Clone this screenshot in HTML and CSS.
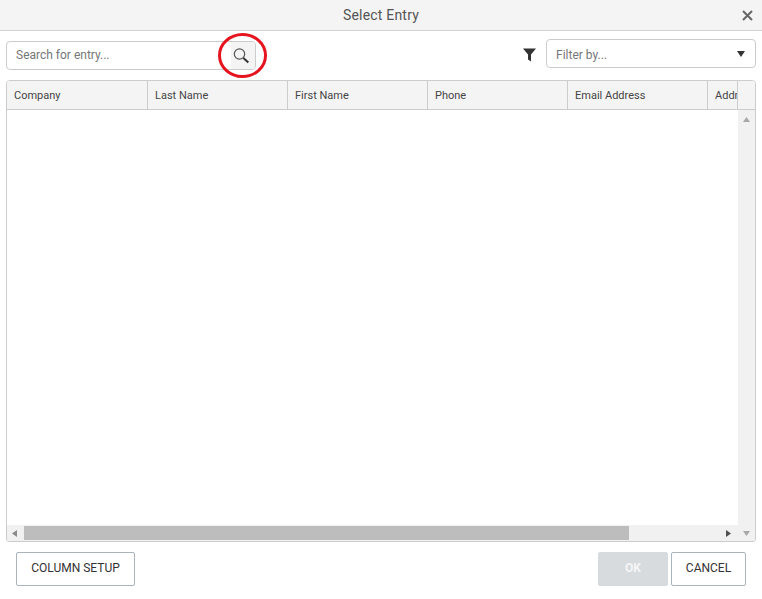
FILE: index.html
```html
<!DOCTYPE html>
<html lang="en">
<head>
<meta charset="utf-8">
<title>Select Entry</title>
<link rel="stylesheet" href="styles.css">
</head>
<body>
<div class="dialog">
  <header class="titlebar">
    <span class="title">Select Entry</span>
    <svg class="close" width="11" height="11" viewBox="0 0 11 11"><path d="M1 1L10 10M10 1L1 10" stroke="#666" stroke-width="2" fill="none"/></svg>
  </header>
  <div class="toolbar">
    <div class="search">
      <span class="placeholder search-text">Search for entry...</span>
      <span class="search-btn">
        <svg class="search-icon" width="18" height="18" viewBox="0 0 18 18"><circle cx="7.5" cy="7" r="5.2" stroke="#555" stroke-width="1.2" fill="none"/><path d="M11.4 11L16.3 15.6" stroke="#333" stroke-width="2" fill="none"/></svg>
      </span>
    </div>
    <svg class="funnel" width="13" height="14" viewBox="0 0 13 14"><path d="M0 0.5H13L8 6.5V13.5L5 11.5V6.5Z" fill="#333"/></svg>
    <div class="filter">
      <span class="placeholder filter-text">Filter by...</span>
      <svg width="8" height="6" viewBox="0 0 8 6"><path d="M0 0H8L4 6Z" fill="#333"/></svg>
    </div>
  </div>
  <div class="grid">
    <div class="grid-head">
      <div class="col col-first">Company</div>
      <div class="col">Last Name</div>
      <div class="col">First Name</div>
      <div class="col">Phone</div>
      <div class="col">Email Address</div>
      <div class="col col-cut">Address</div>
      <div class="head-end"></div>
    </div>
    <div class="grid-body">
      <div class="grid-main">
        <div class="rows"></div>
        <div class="hscroll">
          <svg class="arrow" width="5" height="7" viewBox="0 0 5 7"><path d="M5 0V7L0 3.5Z" fill="#8a8a8a"/></svg>
          <div class="track"><div class="thumb"></div></div>
          <svg class="arrow" width="5" height="7" viewBox="0 0 5 7"><path d="M0 0V7L5 3.5Z" fill="#505050"/></svg>
        </div>
      </div>
      <div class="vscroll">
        <svg width="7" height="5" viewBox="0 0 7 5"><path d="M0 5H7L3.5 0Z" fill="#a8a8a8"/></svg>
        <svg width="7" height="5" viewBox="0 0 7 5"><path d="M0 0H7L3.5 5Z" fill="#a8a8a8"/></svg>
      </div>
    </div>
  </div>
  <footer class="footer">
    <button class="btn btn-setup">COLUMN SETUP</button>
    <div class="footer-right">
      <button class="btn btn-ok">OK</button>
      <button class="btn btn-cancel">CANCEL</button>
    </div>
  </footer>
</div>
<svg class="annotation" width="52" height="48" viewBox="0 0 52 48"><ellipse cx="26.5" cy="23.5" rx="23" ry="21" fill="none" stroke="#e5141f" stroke-width="3"/></svg>
</body>
</html>
```
FILE: styles.css
```css
* { box-sizing: border-box; }
html, body { margin: 0; padding: 0; }
body {
  width: 762px;
  height: 599px;
  background: #fff;
  font-family: Roboto, "Liberation Sans", sans-serif;
  color: #444;
  position: relative;
  overflow: hidden;
}
.dialog { display: flex; flex-direction: column; height: 599px; }
.titlebar {
  height: 31px;
  flex: none;
  background: #f4f4f4;
  border-bottom: 1px solid #d2d2d2;
  display: flex;
  align-items: center;
  justify-content: center;
  position: relative;
}
.title { font-size: 14px; color: #555; letter-spacing: 0.2px; }
.close { position: absolute; left: 742px; top: 10px; }
.toolbar {
  height: 49px;
  flex: none;
  padding: 0 6px;
  display: flex;
  align-items: flex-start;
}
.search {
  width: 250px;
  height: 29px;
  margin-top: 10px;
  border: 1px solid #ccc;
  border-radius: 4px;
  display: flex;
  align-items: center;
  justify-content: space-between;
  padding-left: 9px;
}
.placeholder { font-size: 12px; color: #777; }
.search-text { position: relative; top: -1px; }
.filter-text { position: relative; top: 1px; }
.search-btn {
  width: 24px;
  height: 27px;
  background: #f4f4f4;
  border-radius: 0 3px 3px 0;
  display: flex;
  align-items: center;
  justify-content: flex-start;
  padding-left: 1px;
}
.search-icon { display: block; }
.funnel { margin: 17px 0 0 267px; }
.filter {
  width: 210px;
  height: 29px;
  margin: 8px 0 0 10px;
  border: 1px solid #ccc;
  border-radius: 4px;
  display: flex;
  align-items: center;
  justify-content: space-between;
  padding: 0 10px 0 9px;
}
.grid {
  width: 750px;
  height: 462px;
  flex: none;
  margin-left: 6px;
  border: 1px solid #ccc;
  border-radius: 4px 4px 3px 3px;
  display: flex;
  flex-direction: column;
  overflow: hidden;
}
.grid-head {
  height: 29px;
  flex: none;
  display: flex;
  background: #f4f4f4;
  border-bottom: 1px solid #ccc;
}
.col {
  width: 140px;
  flex: none;
  font-size: 11px;
  line-height: 30px;
  padding-left: 7px;
  color: #444;
  border-right: 1px solid #ccc;
  white-space: nowrap;
  overflow: hidden;
}
.col-first { width: 141px; }
.col-cut { width: 30px; }
.head-end { flex: 1; }
.grid-body { flex: 1; display: flex; min-height: 0; }
.grid-main { flex: 1; display: flex; flex-direction: column; }
.rows { flex: 1; }
.hscroll {
  height: 16px;
  flex: none;
  background: #f1f1f1;
  display: flex;
  align-items: center;
  padding: 0 7px 0 5px;
}
.track { flex: 1; height: 14px; margin: 0 0 0 7px; }
.thumb { width: 605px; height: 14px; background: #bdbdbd; }
.vscroll {
  width: 17px;
  flex: none;
  background: #f1f1f1;
  display: flex;
  flex-direction: column;
  justify-content: space-between;
  align-items: center;
  padding: 7px 0 5px;
}
.arrow { flex: none; }
.footer {
  flex: 1;
  padding: 10px 16px 0;
  display: flex;
  justify-content: space-between;
  align-items: flex-start;
}
.footer-right { display: flex; gap: 3px; }
.btn {
  height: 34px;
  font-family: inherit;
  font-size: 12px;
  line-height: 30px;
  color: #333;
  background: #fff;
  border: 1px solid #a9b4bd;
  border-radius: 2px;
  padding: 0 0 2px;
}
.btn-setup { width: 119px; }
.btn-cancel { width: 75px; }
.btn-ok {
  width: 70px;
  background: #d7dbde;
  border-color: #d7dbde;
  color: #f5f6f7;
  font-weight: 700;
}
.annotation { position: absolute; left: 216px; top: 32px; }
```
